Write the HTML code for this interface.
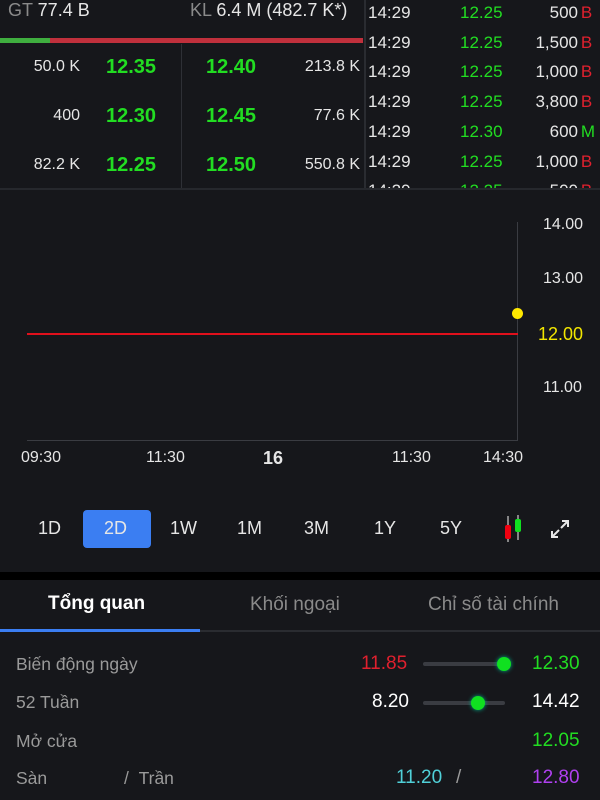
<!DOCTYPE html>
<html><head><meta charset="utf-8"><style>
*{margin:0;padding:0;box-sizing:border-box}
body{width:600px;height:800px;background:#16171b;font-family:"Liberation Sans",sans-serif;color:#e6e6e6;position:relative;overflow:hidden}
.a{position:absolute;white-space:nowrap}
.g{color:#22dd22}.r{color:#e0202e}
.b{font-weight:bold}
.rt{text-align:right}
</style></head><body>
<!-- top left -->
<div class="a" style="left:8px;top:0px;font-size:18px"><span style="color:#8a8a8a">GT</span> 77.4 B</div>
<div class="a" style="left:190px;top:0px;font-size:18px"><span style="color:#8a8a8a">KL</span> 6.4 M (482.7 K*)</div>
<div class="a" style="left:0;top:38px;width:50px;height:5px;background:#3fae3f"></div>
<div class="a" style="left:50px;top:38px;width:313px;height:5px;background:#c0303c"></div>
<div class="a" style="left:181px;top:44px;width:1px;height:146px;background:#2e3036"></div>
<div class="a" style="left:364px;top:0;width:2px;height:190px;background:#2a2c31"></div>
<div class="a rt" style="left:0;width:80px;top:58px;font-size:16px">50.0 K</div>
<div class="a rt" style="left:0;width:80px;top:107px;font-size:16px">400</div>
<div class="a rt" style="left:0;width:80px;top:156px;font-size:16px">82.2 K</div>
<div class="a g b" style="left:106px;top:56px;font-size:20px">12.35</div>
<div class="a g b" style="left:106px;top:105px;font-size:20px">12.30</div>
<div class="a g b" style="left:106px;top:154px;font-size:20px">12.25</div>
<div class="a g b" style="left:206px;top:56px;font-size:20px">12.40</div>
<div class="a g b" style="left:206px;top:105px;font-size:20px">12.45</div>
<div class="a g b" style="left:206px;top:154px;font-size:20px">12.50</div>
<div class="a rt" style="left:280px;width:80px;top:58px;font-size:16px">213.8 K</div>
<div class="a rt" style="left:280px;width:80px;top:107px;font-size:16px">77.6 K</div>
<div class="a rt" style="left:280px;width:80px;top:156px;font-size:16px">550.8 K</div>
<!-- trades -->
<div class="a" style="left:366px;top:0;width:234px;height:188px;overflow:hidden;font-size:17px">
<div style="position:absolute;top:-2px;left:2px;line-height:29.7px">14:29<br>14:29<br>14:29<br>14:29<br>14:29<br>14:29<br>14:29</div>
<div class="g" style="position:absolute;top:-2px;left:94px;line-height:29.7px">12.25<br>12.25<br>12.25<br>12.25<br>12.30<br>12.25<br>12.25</div>
<div style="position:absolute;top:-2px;right:22px;line-height:29.7px;text-align:right">500<br>1,500<br>1,000<br>3,800<br>600<br>1,000<br>500</div>
<div style="position:absolute;top:-2px;right:5px;line-height:29.7px"><span class="r">B</span><br><span class="r">B</span><br><span class="r">B</span><br><span class="r">B</span><br><span class="g">M</span><br><span class="r">B</span><br><span class="r">B</span></div>
</div>
<div class="a" style="left:0;top:188px;width:600px;height:2px;background:#26282d"></div>
<!-- chart -->
<div class="a" style="left:517px;top:222px;width:1px;height:218px;background:#3a3c42"></div>
<div class="a" style="left:27px;top:440px;width:491px;height:1px;background:#3a3c42"></div>
<div class="a" style="left:27px;top:333px;width:491px;height:2px;background:#e0101c"></div>
<div class="a" style="left:512px;top:308px;width:11px;height:11px;border-radius:50%;background:#ffe800"></div>
<div class="a" style="left:543px;top:216px;font-size:16px">14.00</div>
<div class="a" style="left:543px;top:270px;font-size:16px">13.00</div>
<div class="a" style="left:538px;top:324px;font-size:18px;color:#f2e600">12.00</div>
<div class="a" style="left:543px;top:379px;font-size:16px">11.00</div>
<div class="a" style="left:21px;top:449px;font-size:16px">09:30</div>
<div class="a" style="left:146px;top:449px;font-size:16px">11:30</div>
<div class="a b" style="left:263px;top:448px;font-size:18px">16</div>
<div class="a" style="left:392px;top:449px;font-size:16px">11:30</div>
<div class="a" style="left:483px;top:449px;font-size:16px">14:30</div>
<!-- range buttons -->
<div class="a" style="left:83px;top:510px;width:68px;height:38px;border-radius:4px;background:#3b7ef2"></div>
<div class="a" style="left:38px;top:518px;font-size:18px">1D</div>
<div class="a" style="left:104px;top:518px;font-size:18px">2D</div>
<div class="a" style="left:170px;top:518px;font-size:18px">1W</div>
<div class="a" style="left:237px;top:518px;font-size:18px">1M</div>
<div class="a" style="left:304px;top:518px;font-size:18px">3M</div>
<div class="a" style="left:374px;top:518px;font-size:18px">1Y</div>
<div class="a" style="left:440px;top:518px;font-size:18px">5Y</div>
<svg class="a" style="left:500px;top:514px" width="26" height="30"><line x1="8" y1="2" x2="8" y2="28" stroke="#aaa" stroke-width="1.5"/><rect x="5" y="11" width="6" height="14" rx="2" fill="#f00010"/><line x1="18" y1="1" x2="18" y2="26" stroke="#aaa" stroke-width="1.5"/><rect x="15" y="5" width="6" height="13" rx="2" fill="#10e020"/></svg>
<svg class="a" style="left:549px;top:518px" width="22" height="22" fill="none" stroke="#e6e6e6" stroke-width="2"><path d="M13 3h6v6M19 3l-7 7M9 19H3v-6M3 19l7-7"/></svg>
<div class="a" style="left:0;top:572px;width:600px;height:8px;background:#000"></div>
<!-- tabs -->
<div class="a b" style="left:48px;top:593px;font-size:19px;color:#fff">Tổng quan</div>
<div class="a" style="left:250px;top:594px;font-size:19px;color:#8a8a8a">Khối ngoại</div>
<div class="a" style="left:428px;top:594px;font-size:19px;color:#8a8a8a">Chỉ số tài chính</div>
<div class="a" style="left:0;top:630px;width:600px;height:2px;background:#2a2c31"></div>
<div class="a" style="left:0;top:629px;width:200px;height:3px;background:#3b7ef2"></div>
<!-- stats -->
<div class="a" style="left:16px;top:654px;font-size:17.5px;color:#9a9a9a">Biến động ngày</div>
<div class="a" style="left:16px;top:692px;font-size:17.5px;color:#9a9a9a">52 Tuần</div>
<div class="a" style="left:16px;top:731px;font-size:17.5px;color:#9a9a9a">Mở cửa</div>
<div class="a" style="left:16px;top:768px;font-size:17.5px;color:#9a9a9a">Sàn</div>
<div class="a" style="left:124px;top:768px;font-size:17.5px;color:#9a9a9a">/ &nbsp;Trần</div>
<div class="a r" style="left:361px;top:653px;font-size:19px">11.85</div>
<div class="a" style="left:372px;top:691px;font-size:19px;color:#fff">8.20</div>
<div class="a" style="left:423px;top:662px;width:82px;height:4px;border-radius:2px;background:#3a3c42"></div>
<div class="a" style="left:497px;top:657px;width:14px;height:14px;border-radius:50%;background:#10e020;box-shadow:0 0 4px #0a8"></div>
<div class="a" style="left:423px;top:701px;width:82px;height:4px;border-radius:2px;background:#3a3c42"></div>
<div class="a" style="left:471px;top:696px;width:14px;height:14px;border-radius:50%;background:#10e020;box-shadow:0 0 4px #0a8"></div>
<div class="a g" style="left:532px;top:653px;font-size:19px">12.30</div>
<div class="a" style="left:532px;top:691px;font-size:19px;color:#fff">14.42</div>
<div class="a g" style="left:532px;top:730px;font-size:19px">12.05</div>
<div class="a" style="left:396px;top:767px;font-size:19px;color:#50d0d8">11.20</div>
<div class="a" style="left:456px;top:767px;font-size:19px;color:#9a9a9a">/</div>
<div class="a" style="left:532px;top:767px;font-size:19px;color:#b040f0">12.80</div>
</body></html>
